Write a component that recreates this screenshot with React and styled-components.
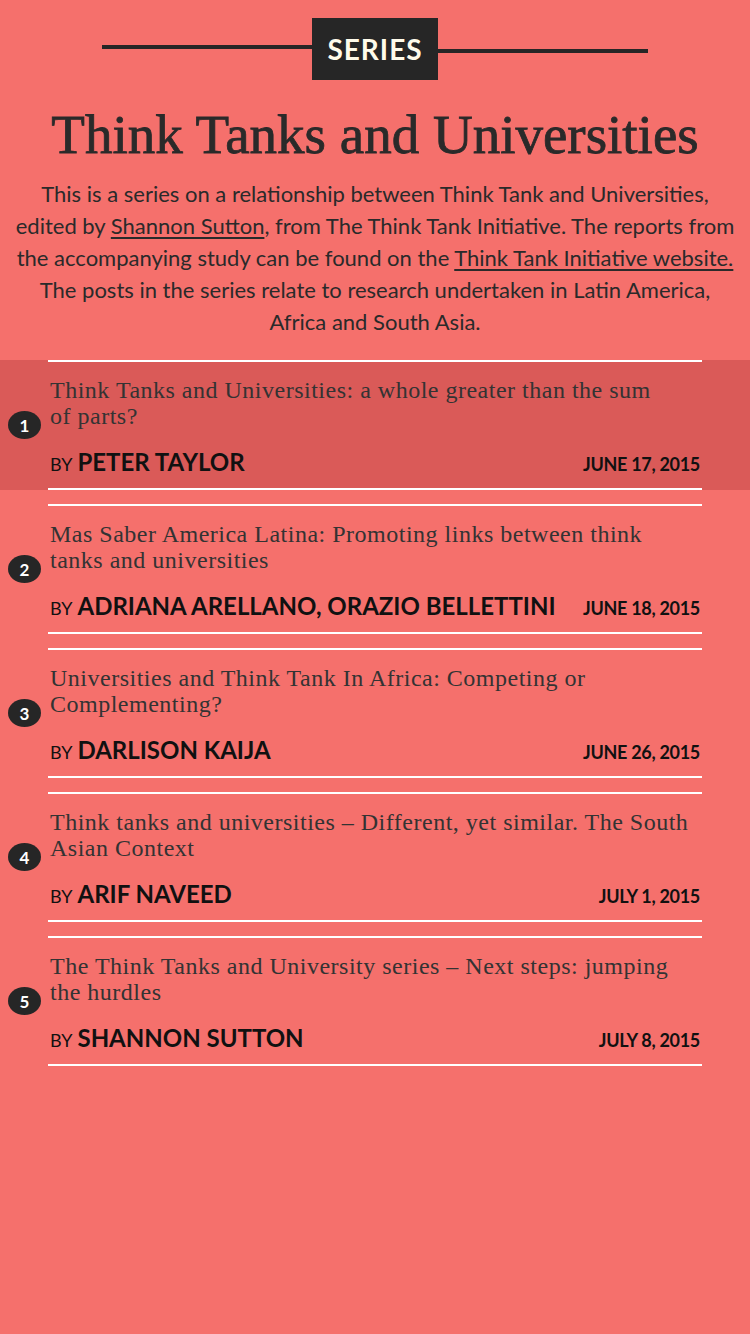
import React from 'react'
import styled, { createGlobalStyle } from 'styled-components'

const posts = [
  {
    title: 'Think Tanks and Universities: a whole greater than the sum of\u00a0parts?',
    author: 'PETER TAYLOR',
    date: 'JUNE 17, 2015',
  },
  {
    title: 'Mas Saber America Latina: Promoting links between think tanks and universities',
    author: 'ADRIANA ARELLANO, ORAZIO BELLETTINI',
    date: 'JUNE 18, 2015',
  },
  {
    title: 'Universities and Think Tank In Africa: Competing or Complementing?',
    author: 'DARLISON KAIJA',
    date: 'JUNE 26, 2015',
  },
  {
    title: 'Think tanks and universities – Different, yet similar. The South Asian Context',
    author: 'ARIF NAVEED',
    date: 'JULY 1, 2015',
  },
  {
    title: 'The Think Tanks and University series – Next steps: jumping the hurdles',
    author: 'SHANNON SUTTON',
    date: 'JULY 8, 2015',
  },
]

const App = () => {
  return (
    <Page>
      <GlobalStyle />
      <Header>
        <Rule up />
        <Badge>SERIES</Badge>
        <Rule />
      </Header>
      <Title>Think Tanks and Universities</Title>
      <Intro>
        This is a series on a relationship between Think Tank and Universities,
        <br />
        edited by <Link>Shannon Sutton</Link>, from The Think Tank Initiative. The reports from
        <br />
        the accompanying study can be found on the <Link>Think Tank Initiative website.</Link>
        <br />
        The posts in the series relate to research undertaken in Latin America,
        <br />
        Africa and South Asia.
      </Intro>
      <List>
        {posts.map((p, i) => (
          <Item key={i} active={i === 0}>
            <Number>{i + 1}</Number>
            <Inner>
              <PostTitle>{p.title}</PostTitle>
              <Byline>
                <Author>
                  <By>BY</By>
                  <Name>{p.author}</Name>
                </Author>
                <Date>{p.date}</Date>
              </Byline>
            </Inner>
          </Item>
        ))}
      </List>
    </Page>
  )
}

export default App

const GlobalStyle = createGlobalStyle`
  html, body {
    margin: 0;
    padding: 0;
    background: #f5706c;
  }
  * {
    box-sizing: border-box;
  }
`

const Page = styled.div`
  width: 750px;
  min-height: 1334px;
  background: #f5706c;
  padding-top: 18px;
  color: #2a2a2a;
`

const Header = styled.div`
  display: flex;
  justify-content: center;
  align-items: center;
`

const Rule = styled.div`
  width: 210px;
  height: 4px;
  background: #262626;
  margin-top: ${p => (p.up ? '-5px' : '4px')};
`

const Badge = styled.div`
  width: 126px;
  height: 62px;
  background: #262626;
  color: #fffbea;
  font-family: Lato, 'Liberation Sans', sans-serif;
  font-weight: 700;
  font-size: 28px;
  letter-spacing: 1px;
  display: flex;
  align-items: center;
  justify-content: center;
`

const Title = styled.h1`
  margin: 23px 0 0;
  font-family: 'Liberation Serif', serif;
  font-weight: 400;
  font-size: 55px;
  line-height: 64px;
  text-align: center;
  color: #2a2a2a;
  -webkit-text-stroke: 0.8px #2a2a2a;
`

const Intro = styled.p`
  margin: 11px 0 0;
  font-family: Lato, 'Liberation Sans', sans-serif;
  font-size: 22px;
  line-height: 32px;
  text-align: center;
  color: #2a2a2a;
  white-space: nowrap;
`

const Link = styled.span`
  text-decoration: underline;
  text-underline-offset: 3px;
`

const List = styled.div`
  margin-top: 22px;
  display: flex;
  flex-direction: column;
  gap: 14px;
`

const Item = styled.div`
  position: relative;
  padding: 0 48px;
  background: ${p => (p.active ? '#da5a58' : 'transparent')};
`

const Inner = styled.div`
  border-top: 2px solid #fff;
  border-bottom: 2px solid #fff;
  padding: 15px 2px 11px;
`

const Number = styled.div`
  position: absolute;
  left: 8px;
  top: 50%;
  transform: translateY(-50%);
  width: 33px;
  height: 28px;
  border-radius: 50%;
  background: #262626;
  color: #fff;
  font-family: Lato, 'Liberation Sans', sans-serif;
  font-weight: 700;
  font-size: 17px;
  display: flex;
  align-items: center;
  justify-content: center;
`

const PostTitle = styled.div`
  font-family: 'Liberation Serif', serif;
  font-size: 24px;
  line-height: 26px;
  letter-spacing: 0.5px;
  color: #333;
  width: 648px;
  height: 52px;
`

const Byline = styled.div`
  margin-top: 18px;
  height: 30px;
  display: flex;
  justify-content: space-between;
  align-items: baseline;
  color: #111;
  font-family: Lato, 'Liberation Sans', sans-serif;
`

const Author = styled.div`
  display: flex;
  align-items: baseline;
  gap: 5px;
`

const By = styled.span`
  font-size: 18px;
`

const Name = styled.span`
  font-size: 24px;
  font-weight: 700;
`

const Date = styled.span`
  font-size: 18px;
  font-weight: 700;
  letter-spacing: -0.3px;
`
